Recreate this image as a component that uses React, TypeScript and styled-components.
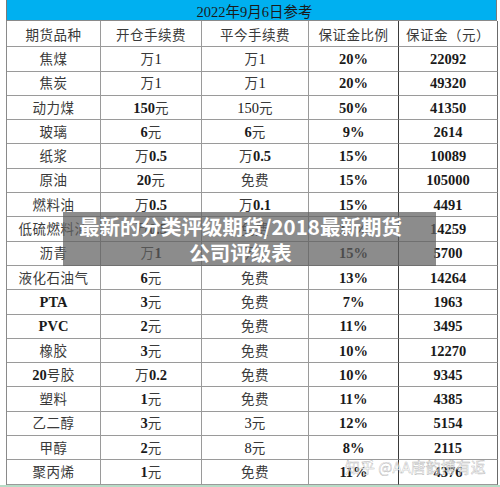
import styled, { createGlobalStyle } from "styled-components";

const GlobalStyle = createGlobalStyle`
    html, body {
        margin: 0;
        padding: 0;
        background: #ffffff;
    }
    body {
        font-family: "Liberation Serif", "Noto Sans CJK SC", serif;
    }
`;

type Row = [string, string, string, string, string];

// 加粗的格子: 索引对应列, 数字部分加粗
const rows: { cells: Row; bold: boolean[] }[] = [
    { cells: ["焦煤", "万1", "万1", "20%", "22092"], bold: [false, false, false, true, true] },
    { cells: ["焦炭", "万1", "万1", "20%", "49320"], bold: [false, false, false, true, true] },
    { cells: ["动力煤", "150元", "150元", "50%", "41350"], bold: [false, true, false, true, true] },
    { cells: ["玻璃", "6元", "6元", "9%", "2614"], bold: [false, true, true, true, true] },
    { cells: ["纸浆", "万0.5", "万0.5", "15%", "10089"], bold: [false, true, true, true, true] },
    { cells: ["原油", "20元", "免费", "15%", "105000"], bold: [false, true, false, true, true] },
    { cells: ["燃料油", "万0.5", "万0.1", "15%", "4491"], bold: [false, true, true, true, true] },
    { cells: ["低硫燃料油", "万0.5", "免费", "15%", "14259"], bold: [false, true, false, true, true] },
    { cells: ["沥青", "万1", "万1", "15%", "5700"], bold: [false, true, false, true, true] },
    { cells: ["液化石油气", "6元", "免费", "13%", "14264"], bold: [false, true, false, true, true] },
    { cells: ["PTA", "3元", "免费", "7%", "1963"], bold: [true, true, false, true, true] },
    { cells: ["PVC", "2元", "免费", "11%", "3495"], bold: [true, true, false, true, true] },
    { cells: ["橡胶", "3元", "免费", "10%", "12270"], bold: [false, true, false, true, true] },
    { cells: ["20号胶", "万0.2", "免费", "10%", "9345"], bold: [true, true, false, true, true] },
    { cells: ["塑料", "1元", "免费", "11%", "4385"], bold: [false, true, false, true, true] },
    { cells: ["乙二醇", "3元", "3元", "12%", "5154"], bold: [false, true, false, true, true] },
    { cells: ["甲醇", "2元", "8元", "8%", "2115"], bold: [false, true, false, true, true] },
    { cells: ["聚丙烯", "1元", "免费", "11%", "4376"], bold: [false, true, false, true, true] },
];

const headers = ["期货品种", "开仓手续费", "平今手续费", "保证金比例", "保证金（元）"];

// 把文字拆成 ASCII 段和中文段, ASCII 段按需加粗
function CellText({ text, bold }: { text: string; bold: boolean }) {
    const parts = text.match(/[\x00-\x7f]+|[^\x00-\x7f]+/g) || [];
    return (
        <Line>
            {parts.map((p, i) =>
                /^[\x00-\x7f]+$/.test(p) ? (
                    <Ascii key={i} $bold={bold}>
                        {p}
                    </Ascii>
                ) : (
                    <Han key={i}>{p}</Han>
                )
            )}
        </Line>
    );
}

export default function App() {
    return (
        <>
            <GlobalStyle />
            <Sheet>
                <Table>
                    <TitleBar>2022年9月6日参考</TitleBar>
                    <HeaderRow>
                        {headers.map((h, i) => (
                            <Cell key={h} $dark={i === 3}>
                                <Han>{h}</Han>
                            </Cell>
                        ))}
                    </HeaderRow>
                    {rows.map((r) => (
                        <DataRow key={r.cells[0]}>
                            {r.cells.map((c, i) => (
                                <Cell key={i} $dark={i === 3}>
                                    <CellText text={c} bold={r.bold[i]} />
                                </Cell>
                            ))}
                        </DataRow>
                    ))}
                    <SelectionEdge />
                </Table>
                <Banner>
                    <div>最新的分类评级期货/2018最新期货</div>
                    <div>公司评级表</div>
                </Banner>
                <Watermark>知乎 @AA唐韵博有返</Watermark>
            </Sheet>
        </>
    );
}

const Sheet = styled.div`
    position: relative;
    width: 500px;
    height: 487px;
    overflow: hidden;
    background: #ffffff;
`;

const Table = styled.div`
    margin-left: 6px;
    width: 491px;
    display: flex;
    flex-direction: column;
    color: #1e1e1e;
`;

const TitleBar = styled.div`
    height: 21px;
    box-sizing: border-box;
    background: #00b0f0;
    border-left: 1px solid #7a7a7a;
    border-right: 1px solid #7a7a7a;
    border-bottom: 1px solid #8a8a8a;
    display: flex;
    align-items: center;
    justify-content: center;
    padding-left: 6px;
    font-family: "Liberation Serif", "Noto Sans CJK SC", serif;
    font-size: 14.5px;
    color: #1a1a1a;
`;

const RowBase = styled.div`
    display: grid;
    grid-template-columns: 94px 101px 107px 90px 99px;
    box-sizing: border-box;
    border-left: 1px solid #8a8a8a;
`;

const HeaderRow = styled(RowBase)`
    height: 26.3px;
    color: #333333;
`;

const DataRow = styled(RowBase)`
    height: 24.3px;
`;

const Cell = styled.div<{ $dark?: boolean }>`
    box-sizing: border-box;
    border-right: 1px solid ${({ $dark }) => ($dark ? "#3a3a3a" : "#9a9a9a")};
    border-bottom: 1px solid #9a9a9a;
    display: flex;
    align-items: center;
    justify-content: center;
    white-space: nowrap;
    overflow: visible;
    &:last-child {
        border-right-color: #6a6a6a;
    }
`;

const Line = styled.span`
    white-space: nowrap;
    line-height: 1;
`;

const Han = styled.span`
    font-family: "Noto Sans CJK SC", sans-serif;
    font-size: 13.5px;
    font-weight: 400;
    color: #3a3a3a;
    letter-spacing: 0.5px;
`;

const Ascii = styled.span<{ $bold: boolean }>`
    font-family: "Liberation Serif", serif;
    font-size: 14.5px;
    font-weight: ${({ $bold }) => ($bold ? 700 : 400)};
    color: #1a1a1a;
`;

const SelectionEdge = styled.div`
    height: 3px;
    margin-left: -6px;
    width: 500px;
    background: #b7dcc6;
`;

const Banner = styled.div`
    position: absolute;
    left: 63px;
    top: 212px;
    width: 373px;
    height: 54px;
    box-sizing: border-box;
    padding-right: 18px;
    background: rgba(95, 95, 95, 0.72);
    display: flex;
    flex-direction: column;
    align-items: center;
    justify-content: center;
    font-family: "Noto Sans CJK SC", sans-serif;
    font-weight: 700;
    font-size: 20.5px;
    line-height: 26px;
    color: #ffffff;
`;

const Watermark = styled.div`
    position: absolute;
    left: 345px;
    top: 456px;
    font-family: "Noto Sans CJK SC", sans-serif;
    font-size: 15px;
    color: rgba(255, 255, 255, 0.75);
    -webkit-text-stroke: 0.4px rgba(120, 120, 120, 0.6);
    white-space: nowrap;
`;
